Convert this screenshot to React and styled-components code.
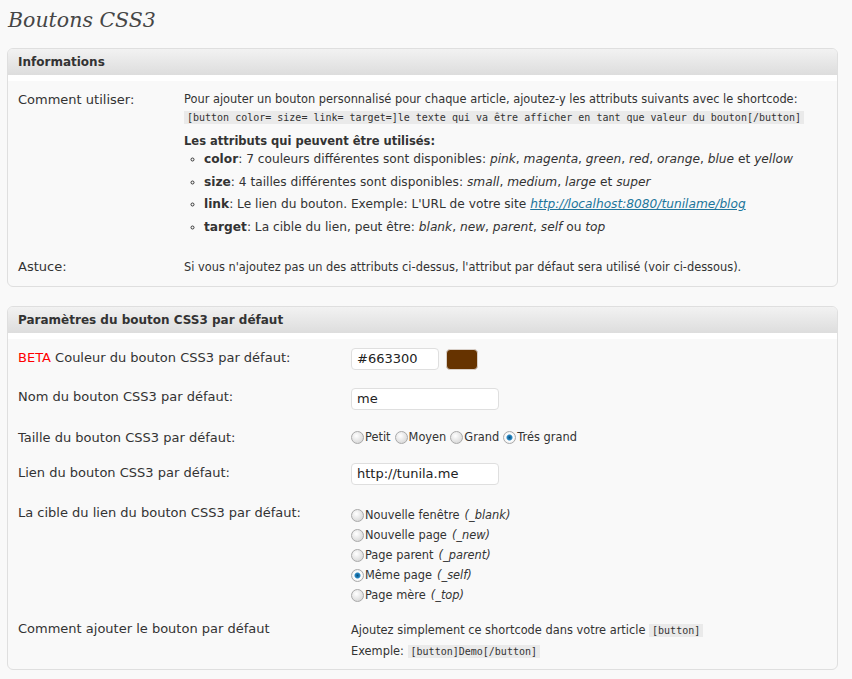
import React from "react";
import styled, { createGlobalStyle } from "styled-components";

const Global = createGlobalStyle`
  html, body { margin: 0; padding: 0; background: #f9f9f9; }
  body { font-family: "DejaVu Sans", Verdana, sans-serif; color: #333; }
`;

const Page = styled.div`
  padding: 0 14px 0 7px;
`;

const Title = styled.h2`
  margin: 0 0 8px 1px;
  font: italic normal 20.5px/40px "DejaVu Serif", Georgia, serif;
  color: #464646;
`;

const Panel = styled.section`
  border: 1px solid #dfdfdf;
  border-radius: 6px;
  background: #f9f9f9;
  margin-bottom: 19px;
  overflow: hidden;
`;

const PanelHeader = styled.h3`
  margin: 0;
  height: 26px;
  padding: 0 10px;
  font: bold 12px/26px "DejaVu Sans", Verdana, sans-serif;
  color: #333;
  background: linear-gradient(#f2f2f2, #dddddd);
  border-bottom: 6px solid #fff;
`;

const Row = styled.div`
  display: grid;
  grid-template-columns: ${(p) => p.$label}px 1fr;
  align-items: start;
  padding: ${(p) => p.$pad || "9px 0 9px 10px"};
`;

const Label = styled.div`
  font-size: 13px;
  line-height: 18px;
  padding-top: ${(p) => p.$top ?? 1}px;
  color: #333;
`;

const Red = styled.span`
  color: #ff0000;
`;

const Small = styled.div`
  font-size: 11.4px;
  line-height: ${(p) => p.$lh || 16}px;
`;

const Code = styled.code`
  font: 10px/14px "DejaVu Sans Mono", Consolas, monospace;
  background: #eaeaea;
  padding: 1px 3px;
`;

const CodeLine = styled.div`
  line-height: 18px;
`;

const AttrTitle = styled.div`
  font-weight: bold;
  font-size: 11.5px;
  line-height: 14px;
  margin-top: 9px;
`;

const List = styled.ul`
  margin: 0;
  padding: 0 0 0 20px;
  list-style: circle;
  font-size: 12.2px;
  line-height: 22.5px;
  & li::marker { font-size: 10px; }
`;

const Link = styled.a`
  color: #21759b;
  font-style: italic;
  text-decoration: underline;
`;

const InputRow = styled.div`
  display: flex;
  align-items: center;
  gap: 7px;
`;

const TextInput = styled.div`
  box-sizing: border-box;
  width: ${(p) => p.$w}px;
  height: 22px;
  background: #fff;
  border: 1px solid #dfdfdf;
  border-radius: 4px;
  padding: 0 5px;
  font-size: 13px;
  line-height: 20px;
  color: #222;
`;

const Swatch = styled.div`
  width: 32px;
  height: 21px;
  box-sizing: border-box;
  border-radius: 4px;
  border: 1px solid #d8cfc8;
  background: #663300;
`;

const RadioGroup = styled.div`
  display: flex;
  flex-direction: ${(p) => (p.$col ? "column" : "row")};
  gap: ${(p) => (p.$col ? 0 : 4)}px;
  padding-top: ${(p) => (p.$col ? 2 : 1)}px;
`;

const RadioItem = styled.label`
  display: flex;
  align-items: center;
  gap: 1px;
  font-size: 11.4px;
  line-height: ${(p) => (p.$col ? 20 : 16)}px;
  color: #333;
  & em { margin-left: 4px; }
`;

const Dot = styled.span`
  display: inline-block;
  box-sizing: border-box;
  width: 13px;
  height: 13px;
  border-radius: 50%;
  border: 1px solid #a9a9a9;
  background: ${(p) =>
    p.$on
      ? "radial-gradient(circle at 50% 50%, #0a4f7a 0, #2a8ac6 2.5px, #ffffff 3.5px, #e2e2e2 100%)"
      : "radial-gradient(circle at 40% 35%, #ffffff 0, #e4e4e4 55%, #cfcfcf 100%)"};
`;

function Radio({ on, col, children }) {
  return (
    <RadioItem $col={col}>
      <Dot $on={on} />
      {children}
    </RadioItem>
  );
}

export default function App() {
  return (
    <Page>
      <Global />
      <Title>Boutons CSS3</Title>

      <Panel>
        <PanelHeader>Informations</PanelHeader>
        <Row $label={166} $pad="10px 0 0 10px">
          <Label $top={0}>Comment utiliser:</Label>
          <div>
            <Small>
              Pour ajouter un bouton personnalisé pour chaque article, ajoutez-y les attributs suivants avec le shortcode:
            </Small>
            <CodeLine>
              <Code>[button color= size= link= target=]le texte qui va être afficher en tant que valeur du bouton[/button]</Code>
            </CodeLine>
            <AttrTitle>Les attributs qui peuvent être utilisés:</AttrTitle>
            <List>
              <li>
                <b>color</b>: 7 couleurs différentes sont disponibles: <i>pink</i>, <i>magenta</i>, <i>green</i>,{" "}
                <i>red</i>, <i>orange</i>, <i>blue</i> et <i>yellow</i>
              </li>
              <li>
                <b>size</b>: 4 tailles différentes sont disponibles: <i>small</i>, <i>medium</i>, <i>large</i> et{" "}
                <i>super</i>
              </li>
              <li>
                <b>link</b>: Le lien du bouton. Exemple: L'URL de votre site{" "}
                <Link>http://localhost:8080/tunilame/blog</Link>
              </li>
              <li>
                <b>target</b>: La cible du lien, peut être: <i>blank</i>, <i>new</i>, <i>parent</i>, <i>self</i> ou{" "}
                <i>top</i>
              </li>
            </List>
          </div>
        </Row>
        <Row $label={166} $pad="20px 0 10px 10px">
          <Label $top={0}>Astuce:</Label>
          <Small $lh={18}>
            Si vous n'ajoutez pas un des attributs ci-dessus, l'attribut par défaut sera utilisé (voir ci-dessous).
          </Small>
        </Row>
      </Panel>

      <Panel>
        <PanelHeader>Paramètres du bouton CSS3 par défaut</PanelHeader>
        <Row $label={333}>
          <Label>
            <Red>BETA</Red> Couleur du bouton CSS3 par défaut:
          </Label>
          <InputRow>
            <TextInput $w={88}>#663300</TextInput>
            <Swatch />
          </InputRow>
        </Row>
        <Row $label={333} $pad="9px 0 9px 10px">
          <Label $top={0}>Nom du bouton CSS3 par défaut:</Label>
          <TextInput $w={148}>me</TextInput>
        </Row>
        <Row $label={333} $pad="9px 0 7px 10px">
          <Label>Taille du bouton CSS3 par défaut:</Label>
          <RadioGroup>
            <Radio>Petit</Radio>
            <Radio>Moyen</Radio>
            <Radio>Grand</Radio>
            <Radio on>Trés grand</Radio>
          </RadioGroup>
        </Row>
        <Row $label={333}>
          <Label>Lien du bouton CSS3 par défaut:</Label>
          <TextInput $w={148}>http://tunila.me</TextInput>
        </Row>
        <Row $label={333}>
          <Label>La cible du lien du bouton CSS3 par défaut:</Label>
          <RadioGroup $col>
            <Radio col>
              Nouvelle fenêtre <em>(_blank)</em>
            </Radio>
            <Radio col>
              Nouvelle page <em>(_new)</em>
            </Radio>
            <Radio col>
              Page parent <em>(_parent)</em>
            </Radio>
            <Radio col on>
              Même page <em>(_self)</em>
            </Radio>
            <Radio col>
              Page mère <em>(_top)</em>
            </Radio>
          </RadioGroup>
        </Row>
        <Row $label={333} $pad="6px 0 7px 10px">
          <Label $top={0}>Comment ajouter le bouton par défaut</Label>
          <div>
            <Small $lh={21}>
              Ajoutez simplement ce shortcode dans votre article <Code>[button]</Code>
            </Small>
            <Small $lh={21}>
              Exemple: <Code>[button]Demo[/button]</Code>
            </Small>
          </div>
        </Row>
      </Panel>
    </Page>
  );
}
